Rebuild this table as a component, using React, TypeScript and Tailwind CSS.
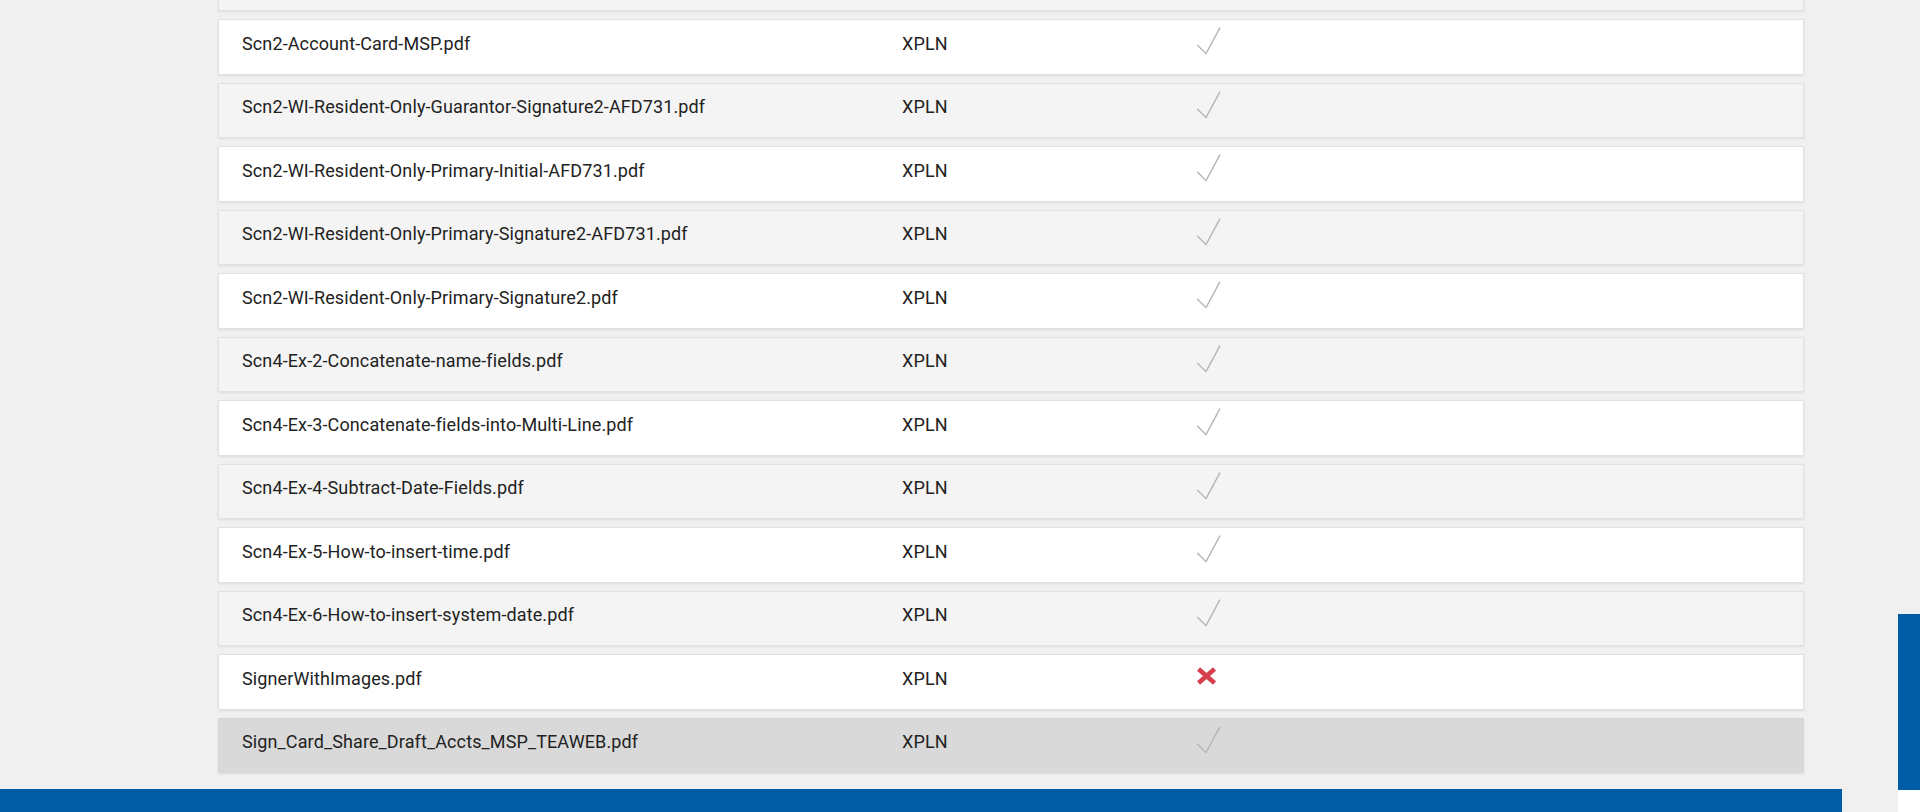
import React from "react";

type Row = { name: string; ok: boolean };

const rows: Row[] = [
  { name: "", ok: true },
  { name: "Scn2-Account-Card-MSP.pdf", ok: true },
  { name: "Scn2-WI-Resident-Only-Guarantor-Signature2-AFD731.pdf", ok: true },
  { name: "Scn2-WI-Resident-Only-Primary-Initial-AFD731.pdf", ok: true },
  { name: "Scn2-WI-Resident-Only-Primary-Signature2-AFD731.pdf", ok: true },
  { name: "Scn2-WI-Resident-Only-Primary-Signature2.pdf", ok: true },
  { name: "Scn4-Ex-2-Concatenate-name-fields.pdf", ok: true },
  { name: "Scn4-Ex-3-Concatenate-fields-into-Multi-Line.pdf", ok: true },
  { name: "Scn4-Ex-4-Subtract-Date-Fields.pdf", ok: true },
  { name: "Scn4-Ex-5-How-to-insert-time.pdf", ok: true },
  { name: "Scn4-Ex-6-How-to-insert-system-date.pdf", ok: true },
  { name: "SignerWithImages.pdf", ok: false },
  { name: "Sign_Card_Share_Draft_Accts_MSP_TEAWEB.pdf", ok: true },
];

function Check() {
  return (
    <svg width="26" height="30" viewBox="0 0 26 30" className="mt-[6px]">
      <polyline
        points="1.3,19 10,27.7 24,1.7"
        fill="none"
        stroke="#b5b5b5"
        strokeWidth="1.4"
        strokeLinejoin="miter"
      />
    </svg>
  );
}

function Cross() {
  return (
    <svg width="22" height="18" viewBox="0 0 22 18" className="mt-[12px]">
      <line x1="2.5" y1="2" x2="18.5" y2="16" stroke="#d6404c" strokeWidth="4.6" />
      <line x1="18.5" y1="2" x2="2.5" y2="16" stroke="#d6404c" strokeWidth="4.6" />
    </svg>
  );
}

export default function App() {
  return (
    <div
      className="relative h-[812px] w-[1920px] overflow-hidden bg-[#f0f0f0]"
      style={{ fontFamily: "Roboto, 'Liberation Sans', Arial, sans-serif" }}
    >
      <div className="mt-[-44.5px] pl-[218px]">
        <div className="flex w-[1586px] flex-col gap-2">
          {rows.map((r, i) => {
            const last = i === rows.length - 1;
            const bg = last ? "bg-[#d9d9d9] border-[#d6d6d6]" : i % 2 === 0 ? "bg-[#f4f4f4] border-[#e1e1e1]" : "bg-white border-[#e1e1e1]";
            return (
              <div
                key={i}
                className={`flex h-[55.5px] items-start border pl-[23px] text-[18px] leading-[26px] tracking-[0.12px] text-[#222222] shadow-[0_1px_2px_rgba(0,0,0,0.08)] ${bg}`}
              >
                <div className="w-[660px] shrink-0 pt-[10.5px]">{r.name}</div>
                <div className="w-[294px] shrink-0 pt-[10.5px]">{r.name ? "XPLN" : ""}</div>
                <div className="flex">{r.ok ? <Check /> : <Cross />}</div>
              </div>
            );
          })}
        </div>
        <div className="ml-[-218px] mt-[16px] h-[60px] w-[1842px] bg-[#005da5]" />
      </div>
      <div className="absolute right-0 top-[614px] h-[176px] w-[22px] bg-[#005da5]" />
      <div className="absolute right-0 top-[790px] h-[22px] w-[22px] bg-white" />
    </div>
  );
}
